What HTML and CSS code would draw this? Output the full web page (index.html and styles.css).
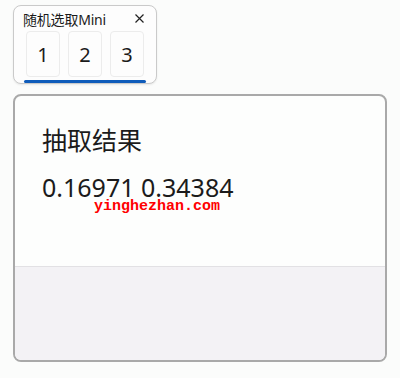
FILE: index.html
```html
<!DOCTYPE html>
<html lang="zh-CN">
<head>
    <meta charset="UTF-8">
    <meta name="viewport" content="width=device-width, initial-scale=1.0">
    <title>随机选取Mini</title>
    <link rel="stylesheet" href="styles.css">
</head>
<body>
    <div class="mini">
        <div class="mini-head">
            <span class="mini-title">随机选取Mini</span>
            <span class="mini-close">
                <svg width="9" height="9" viewBox="0 0 9 9"><path d="M0.5 0.5 L8.5 8.5 M8.5 0.5 L0.5 8.5" stroke="#222" stroke-width="1.2" fill="none"/></svg>
            </span>
        </div>
        <div class="keys">
            <div class="key">1</div>
            <div class="key">2</div>
            <div class="key">3</div>
        </div>
        <div class="bar"></div>
    </div>

    <div class="dialog">
        <div class="dialog-body">
            <h1>抽取结果</h1>
            <p class="result">0.16971 0.34384</p>
        </div>
        <div class="dialog-foot"></div>
        <span class="watermark">yinghezhan.com</span>
    </div>
</body>
</html>
```

FILE: styles.css
```css
body {
    margin: 0;
    padding: 0;
    background-color: #fbfcfb;
    font-family: "Noto Sans", "Noto Sans CJK SC", sans-serif;
    color: #1b1b1b;
}

.mini {
    margin: 5px 0 0 13px;
    width: 144px;
    height: 79px;
    box-sizing: border-box;
    border: 1px solid #cacaca;
    border-radius: 8px;
    background-color: #fdfdfd;
    box-shadow: 0 1px 2px rgba(0, 0, 0, 0.08);
}

.mini-head {
    display: flex;
    justify-content: space-between;
    align-items: center;
    height: 25px;
    padding: 0 12px 0 9px;
}

.mini-title {
    font-size: 14px;
    letter-spacing: -0.2px;
}

.mini-close {
    display: flex;
}

.keys {
    display: flex;
    gap: 8px;
    padding-left: 12px;
}

.key {
    width: 34px;
    height: 46px;
    box-sizing: border-box;
    border: 1px solid #ececec;
    border-radius: 4px;
    background-color: #fdfdfd;
    display: flex;
    align-items: center;
    justify-content: center;
    font-size: 20px;
}

.bar {
    height: 3px;
    margin: 3px 10px 0 10px;
    border-radius: 2px;
    background-color: #0f5cba;
}

.dialog {
    position: relative;
    margin: 10px 0 0 13px;
    width: 374px;
    height: 268px;
    box-sizing: border-box;
    border: 2px solid #a9a9a9;
    border-radius: 8px;
    background-color: #fdfefd;
    overflow: hidden;
    display: flex;
    flex-direction: column;
}

.dialog-body {
    height: 170px;
    padding: 28px 0 0 27px;
    box-sizing: border-box;
}

h1 {
    margin: 0;
    font-size: 25px;
    font-weight: normal;
    line-height: 32px;
}

.result {
    margin: 19px 0 0 0;
    font-size: 25px;
    line-height: 24px;
}

.dialog-foot {
    flex: 1;
    background-color: #f3f2f5;
    border-top: 1px solid #e2e1e4;
}

.watermark {
    position: absolute;
    left: 79px;
    top: 104px;
    font-family: "Liberation Mono", monospace;
    font-weight: bold;
    font-size: 15px;
    line-height: 14px;
    color: #ff0000;
}
```
